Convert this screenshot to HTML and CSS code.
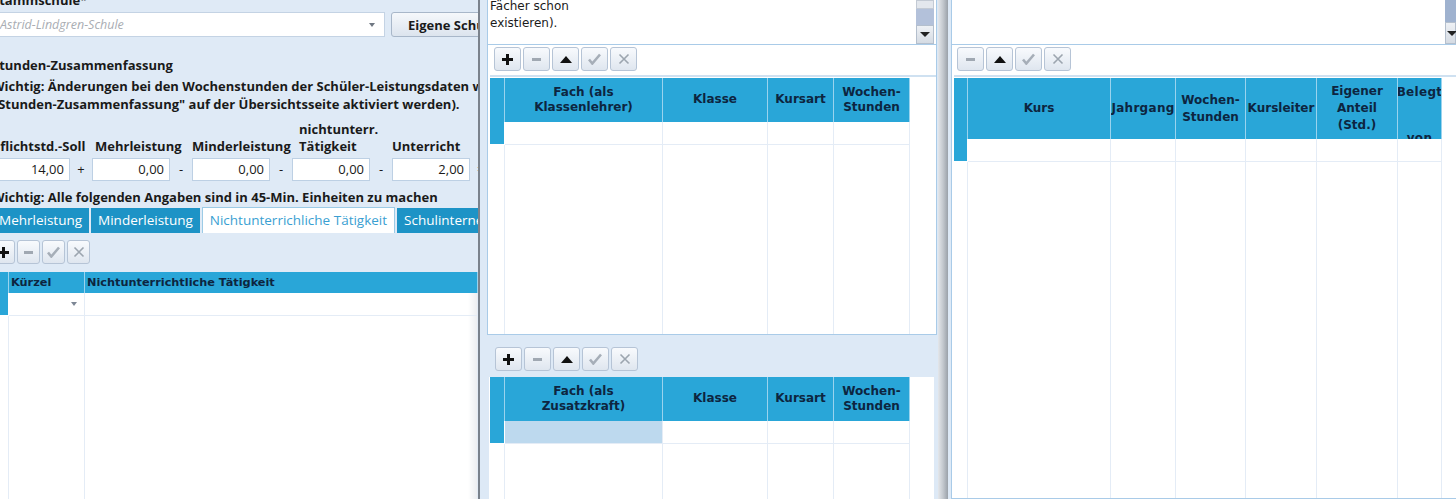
FILE: index.html
```html
<!DOCTYPE html>
<html lang="de">
<head>
    <meta charset="UTF-8">
    <title>Lehrkraft – Stunden</title>
    <link rel="stylesheet" href="styles.css">
</head>
<body>
<div class="screen">

    <!-- linke Seite: Stammdaten und Stunden-Zusammenfassung -->
    <section class="pane-left">
        <div class="left-scroll">
            <div class="field-label">Stammschule*</div>
            <div class="school-row">
                <div class="combo">
                    <span class="combo-text">Astrid-Lindgren-Schule</span>
                    <span class="combo-arrow"></span>
                </div>
                <button class="btn-school">Eigene Schule</button>
            </div>

            <div class="section-title">Stunden-Zusammenfassung</div>
            <div class="note">
                <div>Wichtig: Änderungen bei den Wochenstunden der Schüler-Leistungsdaten werden nur übernommen, wenn die Option</div>
                <div>"Stunden-Zusammenfassung" auf der Übersichtsseite aktiviert werden).</div>
            </div>

            <div class="hours">
                <div class="hours-label">Pflichtstd.-Soll</div><div></div>
                <div class="hours-label indent-s">Mehrleistung</div><div></div>
                <div class="hours-label">Minderleistung</div><div></div>
                <div class="hours-label indent-l">nichtunterr.<br>Tätigkeit</div><div></div>
                <div class="hours-label">Unterricht</div><div></div>

                <div class="hours-input">14,00</div><div class="op">+</div>
                <div class="hours-input">0,00</div><div class="op">-</div>
                <div class="hours-input">0,00</div><div class="op">-</div>
                <div class="hours-input">0,00</div><div class="op">-</div>
                <div class="hours-input">2,00</div><div class="op">=</div>
            </div>

            <div class="note note-single">Wichtig: Alle folgenden Angaben sind in 45-Min. Einheiten zu machen</div>

            <div class="tabs">
                <div class="tab">Mehrleistung</div>
                <div class="tab">Minderleistung</div>
                <div class="tab active">Nichtunterrichliche Tätigkeit</div>
                <div class="tab">Schulinterne Aufgaben</div>
            </div>

            <div class="toolbar toolbar-small">
                <span class="tool"><svg width="11" height="11" viewBox="0 0 11 11"><path d="M4 0h3v4h4v3H7v4H4V7H0V4h4z" fill="#111"/></svg></span>
                <span class="tool"><svg width="11" height="11" viewBox="0 0 11 11"><rect x="1" y="4" width="9" height="3" fill="#a0a8b2"/></svg></span>
                <span class="tool"><svg width="13" height="12" viewBox="0 0 13 12"><path d="M1 6.5l3.3 4L12 1.5" stroke="#a6aeb8" stroke-width="2.6" fill="none"/></svg></span>
                <span class="tool"><svg width="12" height="12" viewBox="0 0 12 12"><path d="M1.5 1.5l9 9M10.5 1.5l-9 9" stroke="#9ca5af" stroke-width="1.6"/></svg></span>
            </div>

            <div class="grid grid-left">
                <div class="hd"></div>
                <div class="hd left">Kürzel</div>
                <div class="hd left">Nichtunterrichtliche Tätigkeit</div>

                <div class="ind"></div>
                <div class="cell"><span class="cell-arrow"></span></div>
                <div class="cell"></div>

                <div class="fill"></div>
                <div class="fill"></div>
                <div class="fill"></div>
            </div>
        </div>
    </section>

    <!-- mittlere Spalte: Klassenlehrer / Zusatzkraft -->
    <section class="pane-mid">
        <div class="box">
            <div class="memo">
                <div class="memo-text">Fächer schon<br>existieren).</div>
                <div class="vscroll">
                    <div class="vs-thumb"></div>
                    <div class="vs-track"></div>
                    <div class="vs-btn"><span class="down-tri"></span></div>
                </div>
            </div>

            <div class="toolbar">
                <span class="tool"><svg width="11" height="11" viewBox="0 0 11 11"><path d="M4 0h3v4h4v3H7v4H4V7H0V4h4z" fill="#111"/></svg></span>
                <span class="tool"><svg width="11" height="11" viewBox="0 0 11 11"><rect x="1" y="4" width="9" height="3" fill="#a0a8b2"/></svg></span>
                <span class="tool"><svg width="12" height="7" viewBox="0 0 12 7"><path d="M0 7L6 0l6 7z" fill="#111"/></svg></span>
                <span class="tool"><svg width="13" height="12" viewBox="0 0 13 12"><path d="M1 6.5l3.3 4L12 1.5" stroke="#a6aeb8" stroke-width="2.6" fill="none"/></svg></span>
                <span class="tool"><svg width="12" height="12" viewBox="0 0 12 12"><path d="M1.5 1.5l9 9M10.5 1.5l-9 9" stroke="#9ca5af" stroke-width="1.6"/></svg></span>
            </div>

            <div class="grid grid-mid">
                <div class="hd"></div>
                <div class="hd">Fach (als<br>Klassenlehrer)</div>
                <div class="hd">Klasse</div>
                <div class="hd">Kursart</div>
                <div class="hd">Wochen-<br>Stunden</div>

                <div class="ind"></div>
                <div class="cell"></div>
                <div class="cell"></div>
                <div class="cell"></div>
                <div class="cell"></div>

                <div class="fill"></div>
                <div class="fill"></div>
                <div class="fill"></div>
                <div class="fill"></div>
                <div class="fill"></div>
            </div>
        </div>

        <div class="lower">
            <div class="toolbar">
                <span class="tool"><svg width="11" height="11" viewBox="0 0 11 11"><path d="M4 0h3v4h4v3H7v4H4V7H0V4h4z" fill="#111"/></svg></span>
                <span class="tool"><svg width="11" height="11" viewBox="0 0 11 11"><rect x="1" y="4" width="9" height="3" fill="#a0a8b2"/></svg></span>
                <span class="tool"><svg width="12" height="7" viewBox="0 0 12 7"><path d="M0 7L6 0l6 7z" fill="#111"/></svg></span>
                <span class="tool"><svg width="13" height="12" viewBox="0 0 13 12"><path d="M1 6.5l3.3 4L12 1.5" stroke="#a6aeb8" stroke-width="2.6" fill="none"/></svg></span>
                <span class="tool"><svg width="12" height="12" viewBox="0 0 12 12"><path d="M1.5 1.5l9 9M10.5 1.5l-9 9" stroke="#9ca5af" stroke-width="1.6"/></svg></span>
            </div>

            <div class="lower-grid">
                <div class="grid grid-mid">
                    <div class="hd"></div>
                    <div class="hd">Fach (als<br>Zusatzkraft)</div>
                    <div class="hd">Klasse</div>
                    <div class="hd">Kursart</div>
                    <div class="hd">Wochen-<br>Stunden</div>

                    <div class="ind"></div>
                    <div class="cell selected"></div>
                    <div class="cell"></div>
                    <div class="cell"></div>
                    <div class="cell"></div>

                    <div class="fill"></div>
                    <div class="fill"></div>
                    <div class="fill"></div>
                    <div class="fill"></div>
                    <div class="fill"></div>
                </div>
            </div>
        </div>
    </section>

    <div class="splitter"></div>

    <!-- rechte Spalte: Kurse -->
    <section class="pane-right">
        <div class="box box-right">
            <div class="memo">
                <div class="memo-text"></div>
                <div class="vscroll vscroll-cut">
                    <div class="vs-track"></div>
                    <div class="vs-btn"><span class="down-tri"></span></div>
                </div>
            </div>

            <div class="toolbar toolbar-right">
                <span class="tool"><svg width="11" height="11" viewBox="0 0 11 11"><rect x="1" y="4" width="9" height="3" fill="#a0a8b2"/></svg></span>
                <span class="tool"><svg width="12" height="7" viewBox="0 0 12 7"><path d="M0 7L6 0l6 7z" fill="#111"/></svg></span>
                <span class="tool"><svg width="13" height="12" viewBox="0 0 13 12"><path d="M1 6.5l3.3 4L12 1.5" stroke="#a6aeb8" stroke-width="2.6" fill="none"/></svg></span>
                <span class="tool"><svg width="12" height="12" viewBox="0 0 12 12"><path d="M1.5 1.5l9 9M10.5 1.5l-9 9" stroke="#9ca5af" stroke-width="1.6"/></svg></span>
            </div>

            <div class="grid grid-right">
                <div class="hd"></div>
                <div class="hd">Kurs</div>
                <div class="hd tight">Jahrgang</div>
                <div class="hd">Wochen-<br>Stunden</div>
                <div class="hd">Kursleiter</div>
                <div class="hd">Eigener<br>Anteil<br>(Std.)</div>
                <div class="hd hd-top tight">Belegt<br><br>von</div>

                <div class="ind"></div>
                <div class="cell"></div>
                <div class="cell"></div>
                <div class="cell"></div>
                <div class="cell"></div>
                <div class="cell"></div>
                <div class="cell"></div>

                <div class="fill"></div>
                <div class="fill"></div>
                <div class="fill"></div>
                <div class="fill"></div>
                <div class="fill"></div>
                <div class="fill"></div>
                <div class="fill"></div>
            </div>
        </div>
    </section>
</div>
</body>
</html>
```

FILE: styles.css
```css
:root {
    --pane-bg: #dde9f6;
    --head-blue: #29a6d8;
    --head-line: #9ad3ee;
    --head-text: #0d2540;
    --grid-line: #e4ecf6;
    --frame: #a9cbe8;
    --tab-blue: #1d93c6;
}
* {
    box-sizing: border-box;
}
html, body {
    margin: 0;
    padding: 0;
    height: 100%;
}
body {
    font-family: "DejaVu Sans", sans-serif;
    font-size: 12px;
    color: #1b1b1b;
    background-color: var(--pane-bg);
    overflow: hidden;
}
.screen {
    display: flex;
    width: 1456px;
    height: 499px;
}

/* ---------- linke Seite ---------- */
.pane-left {
    width: 480px;
    flex: none;
    overflow: hidden;
    background-color: #dfeaf6;
    border-right: 2px solid #7a828c;
}
.left-scroll {
    display: flex;
    flex-direction: column;
    margin: -8px 0 0 -8px;
    height: calc(100% + 8px);
    font-family: "Open Sans", sans-serif;
    font-size: 13px;
    color: #1a1a1a;
}
.field-label {
    font-weight: 700;
    line-height: 16px;
    height: 16px;
}
.school-row {
    display: flex;
    gap: 6px;
    margin-top: 4px;
    height: 25px;
    flex: none;
}
.combo {
    width: 393px;
    flex: none;
    display: flex;
    align-items: center;
    justify-content: space-between;
    padding: 0 9px 0 7px;
    background-color: #fff;
    border: 1px solid #c4d3e4;
}
.combo-text {
    font-style: italic;
    font-size: 12.5px;
    color: #a9adb3;
}
.combo-arrow {
    width: 0;
    height: 0;
    border-top: 4px solid #6f7782;
    border-left: 3.5px solid transparent;
    border-right: 3.5px solid transparent;
}
.btn-school {
    width: 140px;
    flex: none;
    text-align: left;
    padding: 0 0 0 16px;
    font-family: "Open Sans", sans-serif;
    font-size: 13px;
    font-weight: 700;
    color: #1a1a1a;
    background: linear-gradient(#f5f8fb, #dce4ee);
    border: 1px solid #a8b7c9;
    border-radius: 3px;
}
.section-title {
    margin-top: 20px;
    font-weight: 700;
    line-height: 16px;
}
.note {
    margin-top: 4px;
    font-weight: 700;
    line-height: 18px;
    white-space: nowrap;
}
.note-single {
    margin-top: 8px;
    line-height: 16px;
}
.hours {
    display: grid;
    grid-template-columns: 78px 22px 78px 22px 78px 22px 78px 22px 78px 22px;
    grid-template-rows: 34px 23px;
    row-gap: 3px;
    margin-top: 8px;
    flex: none;
}
.hours-label {
    align-self: end;
    font-weight: 700;
    line-height: 17px;
    white-space: nowrap;
}
.hours-label.indent-s {
    padding-left: 3px;
}
.hours-label.indent-l {
    padding-left: 7px;
}
.hours-input {
    background-color: #fff;
    border: 1px solid #bdd0e4;
    text-align: right;
    padding-right: 5px;
    line-height: 21px;
}
.op {
    text-align: center;
    line-height: 23px;
}
.tabs {
    display: flex;
    gap: 2px;
    margin-top: 3px;
    height: 25px;
    flex: none;
    white-space: nowrap;
}
.tab {
    background-color: var(--tab-blue);
    color: #fff;
    font-size: 13.5px;
    line-height: 25px;
    padding: 0 7px;
}
.tab.active {
    background-color: #fff;
    color: #3a9fd2;
    border: 1px solid #9ccbe6;
    border-bottom: none;
    margin-top: -1px;
    line-height: 24px;
}

/* ---------- Werkzeugleisten ---------- */
.toolbar {
    display: flex;
    gap: 2px;
    flex: none;
    height: 24px;
}
.tool {
    width: 27px;
    height: 24px;
    display: flex;
    align-items: center;
    justify-content: center;
    background: linear-gradient(#f8fafd, #dfe6ef);
    border: 1px solid #b6c4d6;
    border-radius: 3px;
}
.toolbar-small {
    margin-top: 7px;
}
.toolbar-small .tool {
    width: 23px;
}

/* ---------- Tabellen ---------- */
.grid {
    display: grid;
    background-color: #fff;
}
.grid .hd {
    background-color: var(--head-blue);
    border-right: 1px solid var(--head-line);
    color: var(--head-text);
    font-family: "DejaVu Sans", sans-serif;
    font-weight: 700;
    font-size: 12px;
    line-height: 15.5px;
    display: flex;
    align-items: center;
    justify-content: center;
    text-align: center;
    white-space: nowrap;
    overflow: hidden;
    padding: 0 3px;
}
.grid .hd.left {
    justify-content: flex-start;
    padding-left: 2px;
}
.grid .hd.tight {
    letter-spacing: 0.3px;
}
.grid .ind {
    background-color: var(--head-blue);
    border-right: 1px solid #fff;
    border-bottom: 1px solid #fff;
}
.grid .cell {
    border-right: 1px solid var(--grid-line);
    border-bottom: 1px solid var(--grid-line);
    position: relative;
}
.grid .cell.selected {
    background-color: #bdd9ee;
}
.grid .fill {
    border-right: 1px solid var(--grid-line);
}
.grid-left {
    flex: 1;
    margin-top: 8px;
    grid-template-columns: 17px 76px 1fr;
    grid-template-rows: 21px 23px 1fr;
    background: linear-gradient(to right, #fff calc(100% - 10px), #ebedf0);
}
.grid-left .hd {
    font-size: 11.3px;
}
.cell-arrow {
    position: absolute;
    right: 7px;
    top: 9px;
    border-top: 4px solid #7d8795;
    border-left: 3.5px solid transparent;
    border-right: 3.5px solid transparent;
}

/* ---------- mittlere Spalte ---------- */
.pane-mid {
    width: 458px;
    flex: none;
    display: flex;
    flex-direction: column;
    padding: 0 1px 0 7px;
}
.box {
    height: 335px;
    flex: none;
    display: flex;
    flex-direction: column;
    background-color: #fff;
    border: 1px solid var(--frame);
    border-top: none;
}
.memo {
    height: 45px;
    flex: none;
    display: flex;
    border-bottom: 1px solid var(--frame);
    overflow: hidden;
}
.memo-text {
    flex: 1;
    padding: 0 0 0 2px;
    margin-top: -2px;
    line-height: 16.5px;
}
.vscroll {
    width: 18px;
    margin-right: 2px;
    display: flex;
    flex-direction: column;
    background-color: #c8d3e4;
}
.vs-thumb {
    height: 9px;
    background-color: #e3e7ed;
    border: 1px solid #c3cad4;
}
.vs-track {
    flex: 1;
    background-color: #b3c1da;
}
.vs-btn {
    height: 19px;
    display: flex;
    align-items: center;
    justify-content: center;
    background: linear-gradient(#eef1f5, #d5dbe3);
    border: 1px solid #b4bfcd;
}
.down-tri {
    border-top: 5px solid #222;
    border-left: 5px solid transparent;
    border-right: 5px solid transparent;
}
.box .toolbar {
    margin: 2px 0 0 6px;
}
.box .grid {
    flex: 1;
    margin: 6px 0 0 2px;
    border-top: 1px solid #fff;
    box-shadow: 0 -2px 0 #cfe1f1;
}
.grid-mid {
    grid-template-columns: 15px 158px 105px 66px 76px;
    grid-template-rows: 44px 23px 1fr;
}
.lower {
    flex: 1;
    display: flex;
    flex-direction: column;
    min-height: 0;
}
.lower .toolbar {
    margin: 12px 0 0 8px;
}
.lower-grid {
    flex: 1;
    margin: 6px 3px 0 2px;
    background-color: #fff;
    display: flex;
}
.lower-grid .grid {
    flex: 1;
    margin-left: 1px;
}

/* ---------- Trenner und rechte Spalte ---------- */
.splitter {
    width: 10px;
    flex: none;
    background: linear-gradient(to right, #e4e7eb, #c3c8ce 50%, #9aa1a9);
}
.pane-right {
    flex: 1;
    padding-left: 3px;
    display: flex;
    min-width: 0;
}
.box-right {
    flex: 1;
    height: 100%;
    border-right: none;
    min-width: 0;
}
.vscroll-cut {
    width: 11px;
    margin-right: 0;
}
.vscroll-cut .vs-track {
    background-color: #9fb2cf;
}
.vscroll-cut .vs-btn {
    height: 22px;
    justify-content: flex-start;
    padding-left: 1px;
}
.box .toolbar-right {
    margin-left: 5px;
}
.grid-right {
    grid-template-columns: 14px 143px 65px 70px 71px 81px 44px;
    grid-template-rows: 61px 23px 1fr;
}
.grid-right .hd {
    line-height: 17px;
}
.grid-right .hd-top {
    align-items: flex-start;
    padding: 3px 0 0;
    line-height: 23px;
}
```
